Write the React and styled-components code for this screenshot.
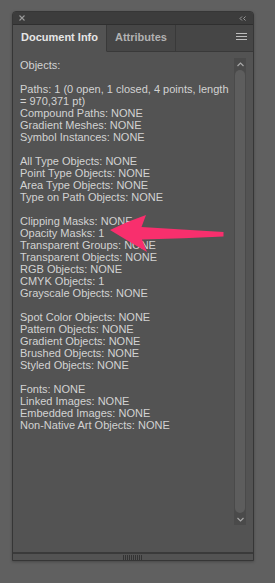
import styled, { createGlobalStyle } from 'styled-components';

const GlobalStyle = createGlobalStyle`
  html, body {
    margin: 0;
    padding: 0;
    background: #606060;
  }
`

const Page = styled.div`
  position: relative;
  width: 275px;
  height: 583px;
  padding: 11px 0 0 12px;
  box-sizing: border-box;
  font-family: "Liberation Sans", Arial, sans-serif;
`

const Panel = styled.div`
  width: 242px;
  height: 550px;
  box-sizing: border-box;
  border: 1px solid #363636;
  border-radius: 4px 4px 0 0;
  background: #535353;
  box-shadow: 0 1px 3px rgba(0, 0, 0, 0.25);
  display: flex;
  flex-direction: column;
  overflow: hidden;
`

const TitleBar = styled.div`
  height: 12px;
  flex: none;
  background: #3c3c3c;
  border-bottom: 1px solid #2f2f2f;
  display: flex;
  align-items: center;
  justify-content: space-between;
  padding: 0 7px 0 6px;
`

const TabBar = styled.div`
  height: 27px;
  flex: none;
  display: flex;
  background: #464646;
`

const Tab = styled.div`
  width: ${p => p.w}px;
  box-sizing: border-box;
  display: flex;
  align-items: center;
  justify-content: center;
  padding-bottom: 2px;
  font-size: 11px;
  font-weight: bold;
  color: ${p => (p.active ? '#e6e6e6' : '#b2b2b2')};
  background: ${p => (p.active ? '#535353' : '#464646')};
  border-right: 1px solid #393939;
  border-bottom: 1px solid ${p => (p.active ? '#535353' : '#393939')};
`

const TabFill = styled.div`
  flex: 1;
  display: flex;
  align-items: center;
  justify-content: flex-end;
  padding-right: 6px;
  padding-bottom: 2px;
  border-bottom: 1px solid #393939;
`

const Body = styled.div`
  flex: 1;
  display: flex;
  padding: 6px 7px 27px 7px;
  min-height: 0;
`

const InfoText = styled.div`
  flex: 1;
  margin-top: 1px;
  font-size: 11px;
  line-height: 12px;
  color: #d2d2d2;
  white-space: pre-wrap;
`

const Scroll = styled.div`
  width: 12px;
  flex: none;
  display: flex;
  flex-direction: column;
  background: #4a4a4a;
`

const ScrollBtn = styled.div`
  height: 12px;
  flex: none;
  display: flex;
  align-items: center;
  justify-content: center;
`

const Thumb = styled.div`
  flex: 1;
  margin: 0 1px;
  background: #5d5d5d;
  border-radius: 5px;
`

const Divider = styled.div`
  height: 2px;
  flex: none;
  background: #3a3a3a;
`

const Footer = styled.div`
  height: 6px;
  flex: none;
  display: flex;
  align-items: center;
  justify-content: center;
  background: #535353;
  padding-right: 2px;
`

const Grip = styled.div`
  width: 19px;
  height: 5px;
  background: repeating-linear-gradient(
    to right,
    #333 0,
    #333 1px,
    transparent 1px,
    transparent 2px
  );
`

const Arrow = styled.svg`
  position: absolute;
  left: 105px;
  top: 210px;
  width: 125px;
  height: 45px;
  overflow: visible;
`

const lines = [
  'Objects:',
  '',
  'Paths: 1 (0 open, 1 closed, 4 points, length',
  '= 970,371 pt)',
  'Compound Paths: NONE',
  'Gradient Meshes: NONE',
  'Symbol Instances: NONE',
  '',
  'All Type Objects: NONE',
  'Point Type Objects: NONE',
  'Area Type Objects: NONE',
  'Type on Path Objects: NONE',
  '',
  'Clipping Masks: NONE',
  'Opacity Masks: 1',
  'Transparent Groups: NONE',
  'Transparent Objects: NONE',
  'RGB Objects: NONE',
  'CMYK Objects: 1',
  'Grayscale Objects: NONE',
  '',
  'Spot Color Objects: NONE',
  'Pattern Objects: NONE',
  'Gradient Objects: NONE',
  'Brushed Objects: NONE',
  'Styled Objects: NONE',
  '',
  'Fonts: NONE',
  'Linked Images: NONE',
  'Embedded Images: NONE',
  'Non-Native Art Objects: NONE',
]

function App() {
  return (
    <Page>
      <GlobalStyle />
      <Panel>
        <TitleBar>
          <svg width="6" height="6" viewBox="0 0 6 6">
            <path d="M0.5 0.5 L5.5 5.5 M5.5 0.5 L0.5 5.5" stroke="#9a9a9a" strokeWidth="1.1" />
          </svg>
          <svg width="7" height="5" viewBox="0 0 7 5">
            <path d="M3 0.5 L1 2.5 L3 4.5 M6.5 0.5 L4.5 2.5 L6.5 4.5" stroke="#9a9a9a" strokeWidth="1" fill="none" />
          </svg>
        </TitleBar>
        <TabBar>
          <Tab active w={94}>Document Info</Tab>
          <Tab w={69}>Attributes</Tab>
          <TabFill>
            <svg width="11" height="8" viewBox="0 0 11 8">
              <path d="M0 0.5 H11 M0 3.5 H11 M0 6.5 H11" stroke="#bdbdbd" strokeWidth="1" />
            </svg>
          </TabFill>
        </TabBar>
        <Body>
          <InfoText>{lines.join('\n')}</InfoText>
          <Scroll>
            <ScrollBtn>
              <svg width="7" height="5" viewBox="0 0 7 5">
                <path d="M0.5 4 L3.5 1 L6.5 4" stroke="#a8a8a8" strokeWidth="1.2" fill="none" />
              </svg>
            </ScrollBtn>
            <Thumb />
            <ScrollBtn>
              <svg width="7" height="5" viewBox="0 0 7 5">
                <path d="M0.5 1 L3.5 4 L6.5 1" stroke="#a8a8a8" strokeWidth="1.2" fill="none" />
              </svg>
            </ScrollBtn>
          </Scroll>
        </Body>
        <Divider />
        <Footer>
          <Grip />
        </Footer>
      </Panel>
      <Arrow viewBox="105 210 125 45">
        <path
          d="M110 230 Q128 221 146 215 L141.5 227 Q182 229.5 223.5 232 L223.5 236.5 Q184 238.5 142 239.5 L147 252 Q128 241 110 230 Z"
          fill="#f82f6d"
        />
      </Arrow>
    </Page>
  )
}

export default App
